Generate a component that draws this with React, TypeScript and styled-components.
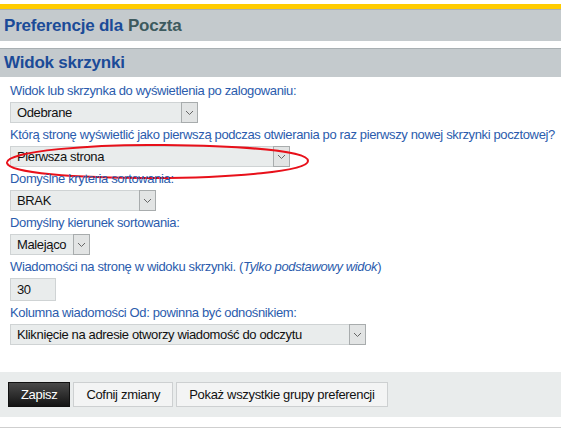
import styled, { createGlobalStyle } from "styled-components"

const GlobalStyle = createGlobalStyle`
  body {
    margin: 0;
    background: #fff;
    font-family: "Liberation Sans", Arial, sans-serif;
    font-size: 13px;
  }
`

// Styles
const Page = styled.div`
  padding-top: 4px;
  width: 561px;
`
const TopStripe = styled.div`
  height: 5px;
  background: #ffcc00;
`
const Header = styled.div<{ $gap?: boolean }>`
  display: flex;
  align-items: center;
  height: ${p => (p.$gap ? 28 : 31)}px;
  margin-top: ${p => (p.$gap ? 7 : 0)}px;
  padding: 0 4px;
  background: #c4cacd;
  border-top: 1px solid #a9b0b3;
  font-size: 17px;
  font-weight: bold;
  letter-spacing: -0.2px;
  color: #1b4b98;
`
const Muted = styled.span`
  color: #3d5a5e;
  margin-left: 5px;
`
const Form = styled.div`
  padding: 6px 10px 0;
  display: flex;
  flex-direction: column;
  gap: 4px;
  letter-spacing: -0.36px;
`
const Field = styled.div`
  position: relative;
  display: flex;
  flex-direction: column;
  align-items: flex-start;
  gap: 3px;
`
const Label = styled.div`
  line-height: 16px;
  color: #2b5cad;
  white-space: nowrap;
`
const Select = styled.div<{ $w: number }>`
  display: flex;
  align-items: stretch;
  width: ${p => p.$w}px;
  height: 21px;
  box-sizing: border-box;
  background: #e9ecec;
  border: 1px solid #cfd3d4;
  color: #111;
`
const Value = styled.span`
  flex: 1;
  display: flex;
  align-items: center;
  padding-left: 6px;
  white-space: nowrap;
  overflow: hidden;
`
const Arrow = styled.span`
  width: 15px;
  display: flex;
  align-items: center;
  justify-content: center;
  background: #e2e4e4;
  border: 1px solid #a8acad;
  margin: -1px -1px -1px 0;
`
const TextInput = styled.div`
  width: 46px;
  height: 23px;
  box-sizing: border-box;
  display: flex;
  align-items: center;
  padding-left: 6px;
  background: #e9ecec;
  border: 1px solid #cfd3d4;
  color: #111;
`
const Ring = styled.svg`
  position: absolute;
  left: -6px;
  top: 14px;
  pointer-events: none;
`
const ButtonBar = styled.div`
  display: flex;
  gap: 3px;
  margin-top: 27px;
  padding: 10px 8px;
  background: #e9ecec;
`
const Button = styled.button<{ $primary?: boolean }>`
  height: 25px;
  padding: 0 12px;
  font: 13px "Liberation Sans", Arial, sans-serif;
  letter-spacing: -0.32px;
  cursor: pointer;
  border: 1px solid ${p => (p.$primary ? "#111" : "#cdd0d1")};
  background: ${p => (p.$primary ? "linear-gradient(#4a4a4a, #141414)" : "#f3f4f4")};
  color: ${p => (p.$primary ? "#fff" : "#111")};
`
const Rule = styled.div`
  margin-top: 10px;
  border-top: 1px solid #cfcfcf;
`

const Chevron = () => (
  <svg width="9" height="6" viewBox="0 0 9 6">
    <path d="M1 1 L4.5 4.5 L8 1" fill="none" stroke="#666" strokeWidth="1" />
  </svg>
)

const Dropdown: React.FC<{ w: number; value: string }> = ({ w, value }) => (
  <Select $w={w}>
    <Value>{value}</Value>
    <Arrow><Chevron /></Arrow>
  </Select>
)

const App = () => (
  <Page>
    <GlobalStyle />
    <TopStripe />
    <Header>Preferencje dla<Muted>Poczta</Muted></Header>
    <Header $gap>Widok skrzynki</Header>
    <Form>
      <Field>
        <Label>Widok lub skrzynka do wyświetlenia po zalogowaniu:</Label>
        <Dropdown w={188} value="Odebrane" />
      </Field>
      <Field>
        <Label>Którą stronę wyświetlić jako pierwszą podczas otwierania po raz pierwszy nowej skrzynki pocztowej?</Label>
        <Dropdown w={280} value="Pierwsza strona" />
        <Ring width="308" height="40" viewBox="0 0 308 40">
          <path
            d="M3 22 C 1 10, 90 3, 160 4 C 240 5, 304 10, 304 20 C 304 30, 230 37, 150 37 C 70 37, 5 32, 3 22 Z"
            fill="none"
            stroke="#e8101a"
            strokeWidth="2"
          />
        </Ring>
      </Field>
      <Field>
        <Label>Domyślne kryteria sortowania:</Label>
        <Dropdown w={146} value="BRAK" />
      </Field>
      <Field>
        <Label>Domyślny kierunek sortowania:</Label>
        <Dropdown w={80} value="Malejąco" />
      </Field>
      <Field>
        <Label>Wiadomości na stronę w widoku skrzynki. (<i>Tylko podstawowy widok</i>)</Label>
        <TextInput>30</TextInput>
      </Field>
      <Field>
        <Label>Kolumna wiadomości Od: powinna być odnośnikiem:</Label>
        <Dropdown w={356} value="Kliknięcie na adresie otworzy wiadomość do odczytu" />
      </Field>
    </Form>
    <ButtonBar>
      <Button $primary>Zapisz</Button>
      <Button>Cofnij zmiany</Button>
      <Button>Pokaż wszystkie grupy preferencji</Button>
    </ButtonBar>
    <Rule />
  </Page>
)

export default App
